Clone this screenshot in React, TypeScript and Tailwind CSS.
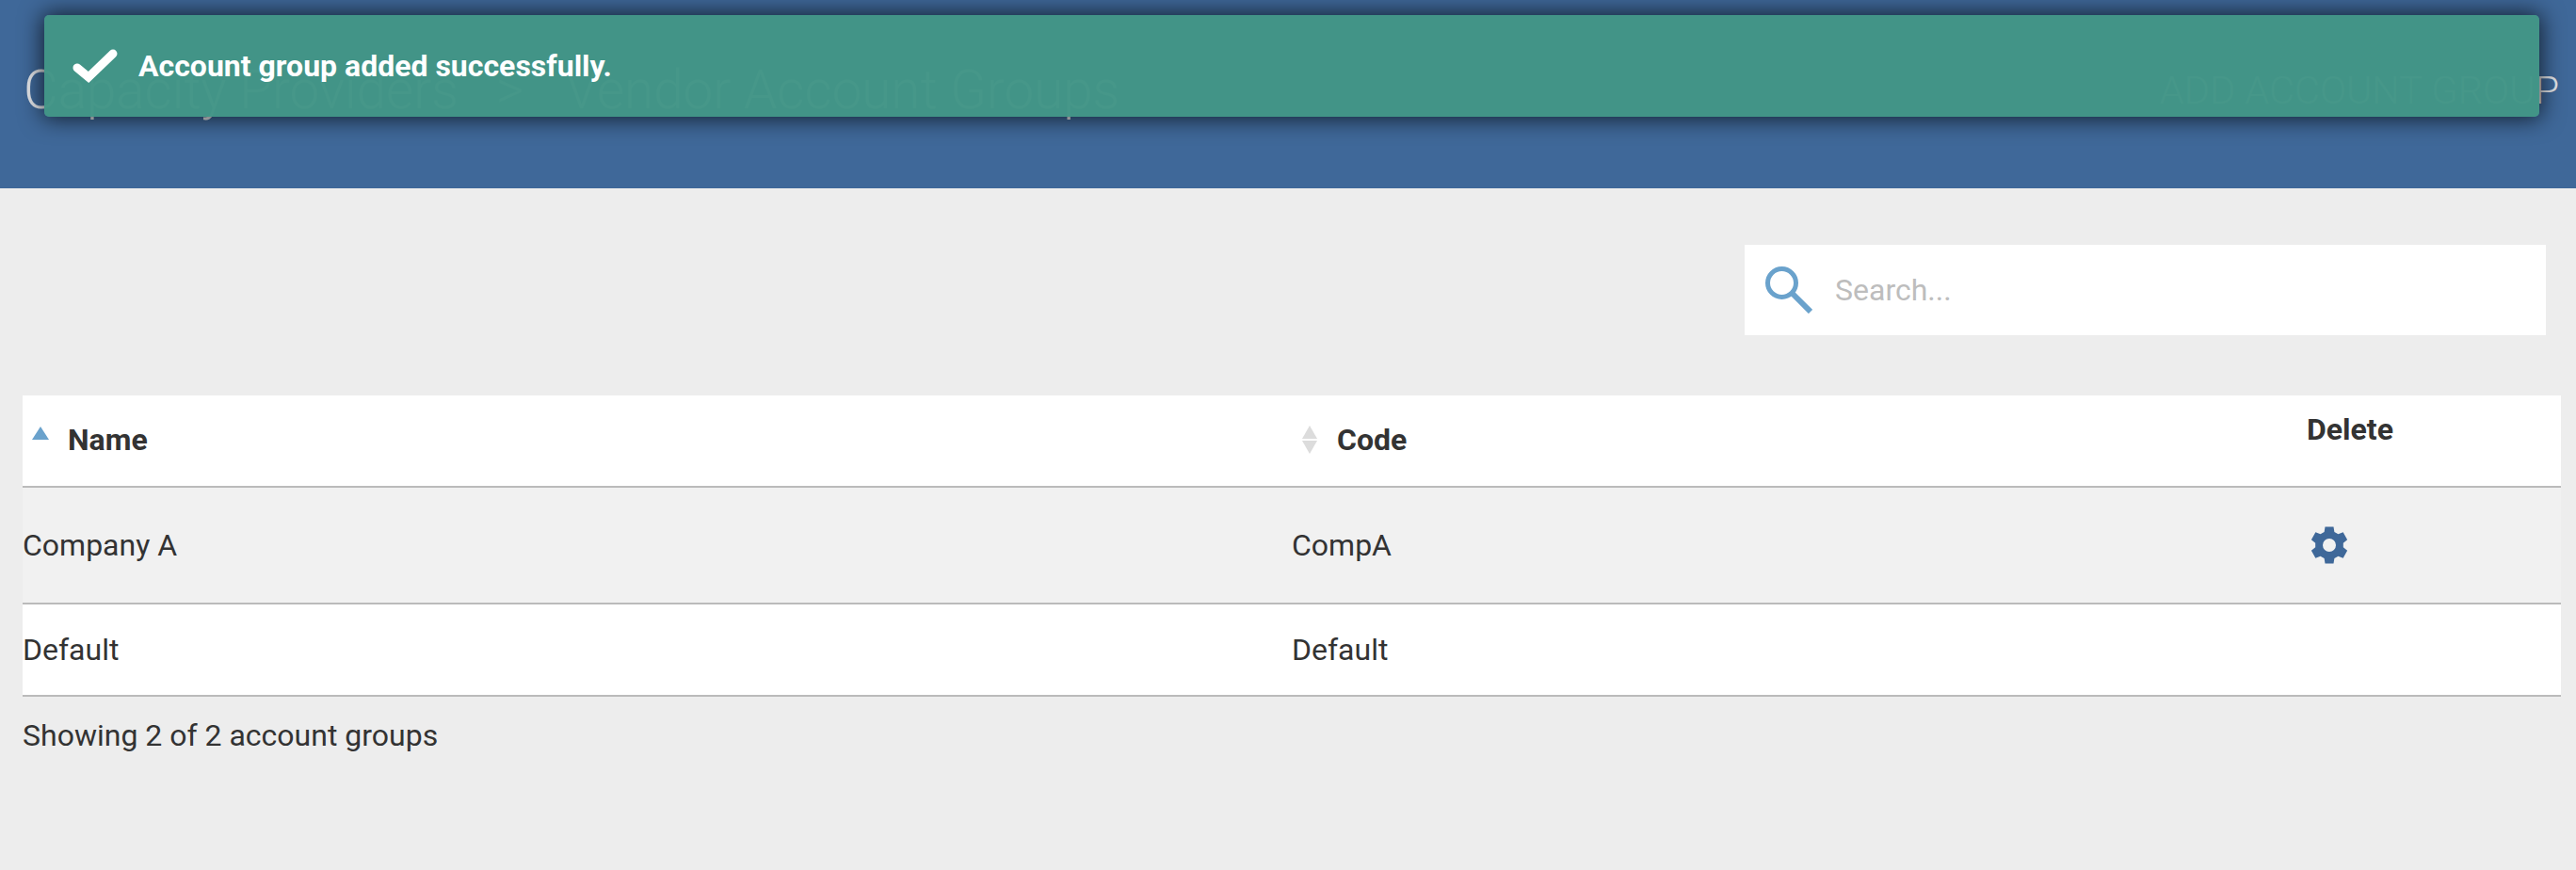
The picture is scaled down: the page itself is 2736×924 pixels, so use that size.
const font = { fontFamily: "Roboto, sans-serif" };

const rows = [
  { name: "Company A", code: "CompA", gear: true },
  { name: "Default", code: "Default", gear: false },
];

// six toothed gear, points worked out from the center of a 40x40 box
const gearPath = () => {
  const pt = (deg: number, r: number) => {
    const a = (deg * Math.PI) / 180;
    return `${(20 + r * Math.sin(a)).toFixed(2)} ${(20 - r * Math.cos(a)).toFixed(2)}`;
  };
  let d = "";
  for (let i = 0; i < 6; i++) {
    const c = i * 60;
    d += `${i === 0 ? "M" : "L"}${pt(c - 21, 15)} L${pt(c - 13, 20)} L${pt(c + 13, 20)} L${pt(c + 21, 15)} `;
  }
  d += "Z M27 20 A7 7 0 1 0 13 20 A7 7 0 1 0 27 20 Z";
  return d;
};

const GearIcon = () => (
  <svg viewBox="0 0 40 40" className="w-[40px] h-[40px] ml-[3px] fill-[#3f6899]">
    <path d={gearPath()} fillRule="evenodd" />
  </svg>
);

export default function App() {
  return (
    <div className="relative h-[924px] bg-[#ededed] overflow-hidden text-[#333333]" style={font}>
      <div className="h-[200px] bg-[#3f6899] flex items-start justify-between pt-[63px] pl-[25px] pr-[18px]">
        <div className="flex text-[56.5px] leading-[66px] font-light text-[#e4e6ea]">
          <span>Capacity Providers</span>
          <span className="ml-[40px]">&gt;</span>
          <span className="ml-[44px]">Vendor Account Groups</span>
        </div>
        <div className="mt-[3px] text-[41.5px] leading-[60px] font-light text-[#e4e6ea]">ADD ACCOUNT GROUP</div>
      </div>

      {/* toast */}
      <div className="absolute left-[47px] top-[16px] w-[2650px] h-[108px] rounded-[5px] bg-[#429587]/[0.98] shadow-[0_0_24px_2px_rgba(0,0,0,0.7)] flex items-center pl-[29px] pb-[1px]">
        <svg viewBox="0 0 50 40" className="w-[50px] h-[40px] fill-none stroke-white">
          <path d="M6 22 L18 32 L44 7" strokeWidth="9" strokeLinecap="round" />
        </svg>
        <span className="ml-[21px] text-[32px] font-bold text-white">Account group added successfully.</span>
      </div>

      <div className="flex justify-end pr-[32px] pt-[60px]">
        <div className="w-[851px] h-[96px] bg-white flex items-center pl-[22px]">
          <svg viewBox="0 0 50 50" className="w-[50px] h-[50px] fill-none stroke-[#6aa2cc]">
            <circle cx="17.5" cy="17.5" r="15" strokeWidth="5" />
            <path d="M28 28 L48 48" strokeWidth="6" />
          </svg>
          <span className="ml-[24px] text-[32px] text-[#bdbdbd]">Search...</span>
        </div>
      </div>

      <div className="ml-[24px] mr-[16px] mt-[64px]">
        <div className="grid grid-cols-[1348px_1079px_1fr] h-[98px] bg-white border-b-2 border-[#bbbbbb] text-[32px] font-bold">
          <div className="flex items-center pl-[10px] pb-[3px]">
            <svg viewBox="0 0 18 14" className="w-[18px] h-[14px] fill-[#6aa2cc] mb-[14px]">
              <path d="M9 0 L18 14 L0 14 Z" />
            </svg>
            <span className="ml-[20px]">Name</span>
          </div>
          <div className="flex items-center pl-[11px] pb-[3px]">
            <div className="flex flex-col gap-[2px]">
              <svg viewBox="0 0 16 14" className="w-[16px] h-[14px] fill-[#dcdcdc]">
                <path d="M8 0 L16 14 L0 14 Z" />
              </svg>
              <svg viewBox="0 0 16 14" className="w-[16px] h-[14px] fill-[#dcdcdc]">
                <path d="M0 0 L16 0 L8 14 Z" />
              </svg>
            </div>
            <span className="ml-[21px]">Code</span>
          </div>
          <div className="pt-[12px] -ml-[1px]">Delete</div>
        </div>
        {rows.map((r, i) => (
          <div
            key={r.name}
            className={
              i === 0
                ? "grid grid-cols-[1348px_1079px_1fr] h-[124px] items-center bg-[#f1f1f1] border-b-2 border-[#bbbbbb] text-[32px]"
                : "grid grid-cols-[1348px_1079px_1fr] h-[98px] items-center bg-white border-b-2 border-[#bbbbbb] text-[32px]"
            }
          >
            <div>{r.name}</div>
            <div>{r.code}</div>
            <div>{r.gear && <GearIcon />}</div>
          </div>
        ))}
        <div className="mt-[17px] text-[32px]">Showing 2 of 2 account groups</div>
      </div>
    </div>
  );
}
